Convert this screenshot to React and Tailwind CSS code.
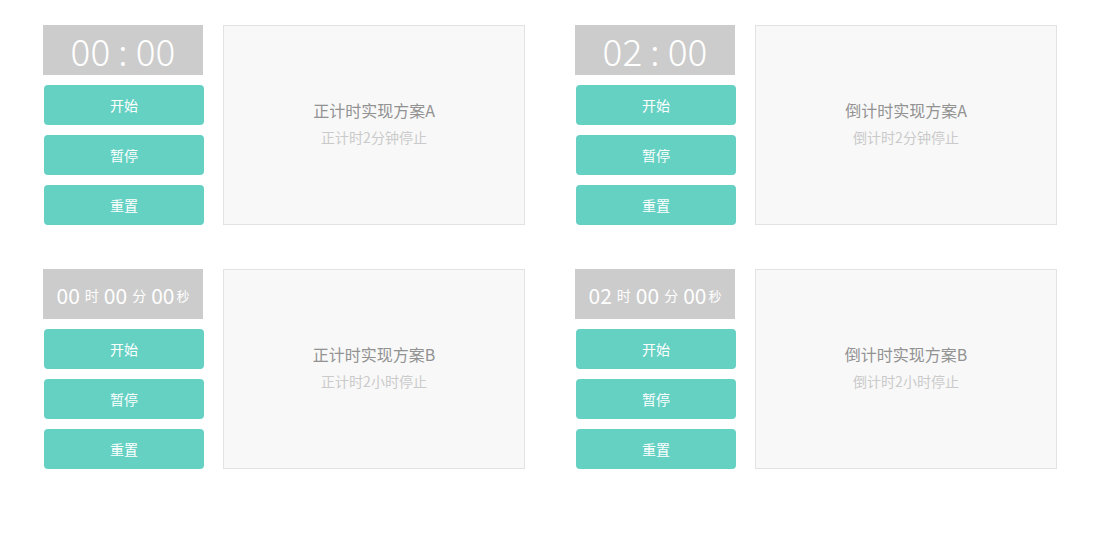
const groups = [
  { time: "00 : 00", title: "正计时实现方案A", note: "正计时2分钟停止", full: false },
  { time: "02 : 00", title: "倒计时实现方案A", note: "倒计时2分钟停止", full: false },
  { time: ["00", "00", "00"], title: "正计时实现方案B", note: "正计时2小时停止", full: true },
  { time: ["02", "00", "00"], title: "倒计时实现方案B", note: "倒计时2小时停止", full: true },
]

const Display = ({ time, full }) => {
  if (!full) {
    return (
      <div className="h-[50px] bg-[#cccccc] flex items-center justify-center text-white text-[37px] leading-none font-light">
        {time}
      </div>
    )
  }
  return (
    <div className="h-[50px] bg-[#cccccc] flex items-center justify-center text-white leading-none pt-[2px]">
      <span className="text-[21px]">{time[0]}</span>
      <span className="text-[14px] mx-[5px]">时</span>
      <span className="text-[21px]">{time[1]}</span>
      <span className="text-[14px] mx-[5px]">分</span>
      <span className="text-[21px]">{time[2]}</span>
      <span className="text-[13px] ml-[2px]">秒</span>
    </div>
  )
}

const Timer = ({ time, title, note, full }) => {
  return (
    <div className="flex flex-row gap-5 w-[482px]">
      <div className="flex flex-col w-[160px] gap-[10px]">
        <Display time={time} full={full} />
        {["开始", "暂停", "重置"].map((label) => (
          <button
            key={label}
            className="h-10 w-[160px] ml-px rounded-[4px] bg-[#64d1c3] text-white text-[14px] leading-none"
          >
            {label}
          </button>
        ))}
      </div>
      <div className="w-[302px] h-[200px] bg-[#f8f8f8] border border-[#e3e3e3] flex flex-col items-center justify-center pb-[4px]">
        <h3 className="text-[16px] text-[#929292] leading-none">{title}</h3>
        <p className="text-[14px] text-[#cacaca] leading-none mt-[12px]">{note}</p>
      </div>
    </div>
  )
}

const App = () => {
  return (
    <div
      className="w-[1110px] h-[545px] bg-white pl-[43px] pt-[25px]"
      style={{ fontFamily: '"Noto Sans CJK SC", "Noto Sans", sans-serif' }}
    >
      <div className="grid grid-cols-[482px_482px] gap-x-[50px] gap-y-[44px]">
        {groups.map((g) => (
          <Timer key={g.title} {...g} />
        ))}
      </div>
    </div>
  )
}

export default App
